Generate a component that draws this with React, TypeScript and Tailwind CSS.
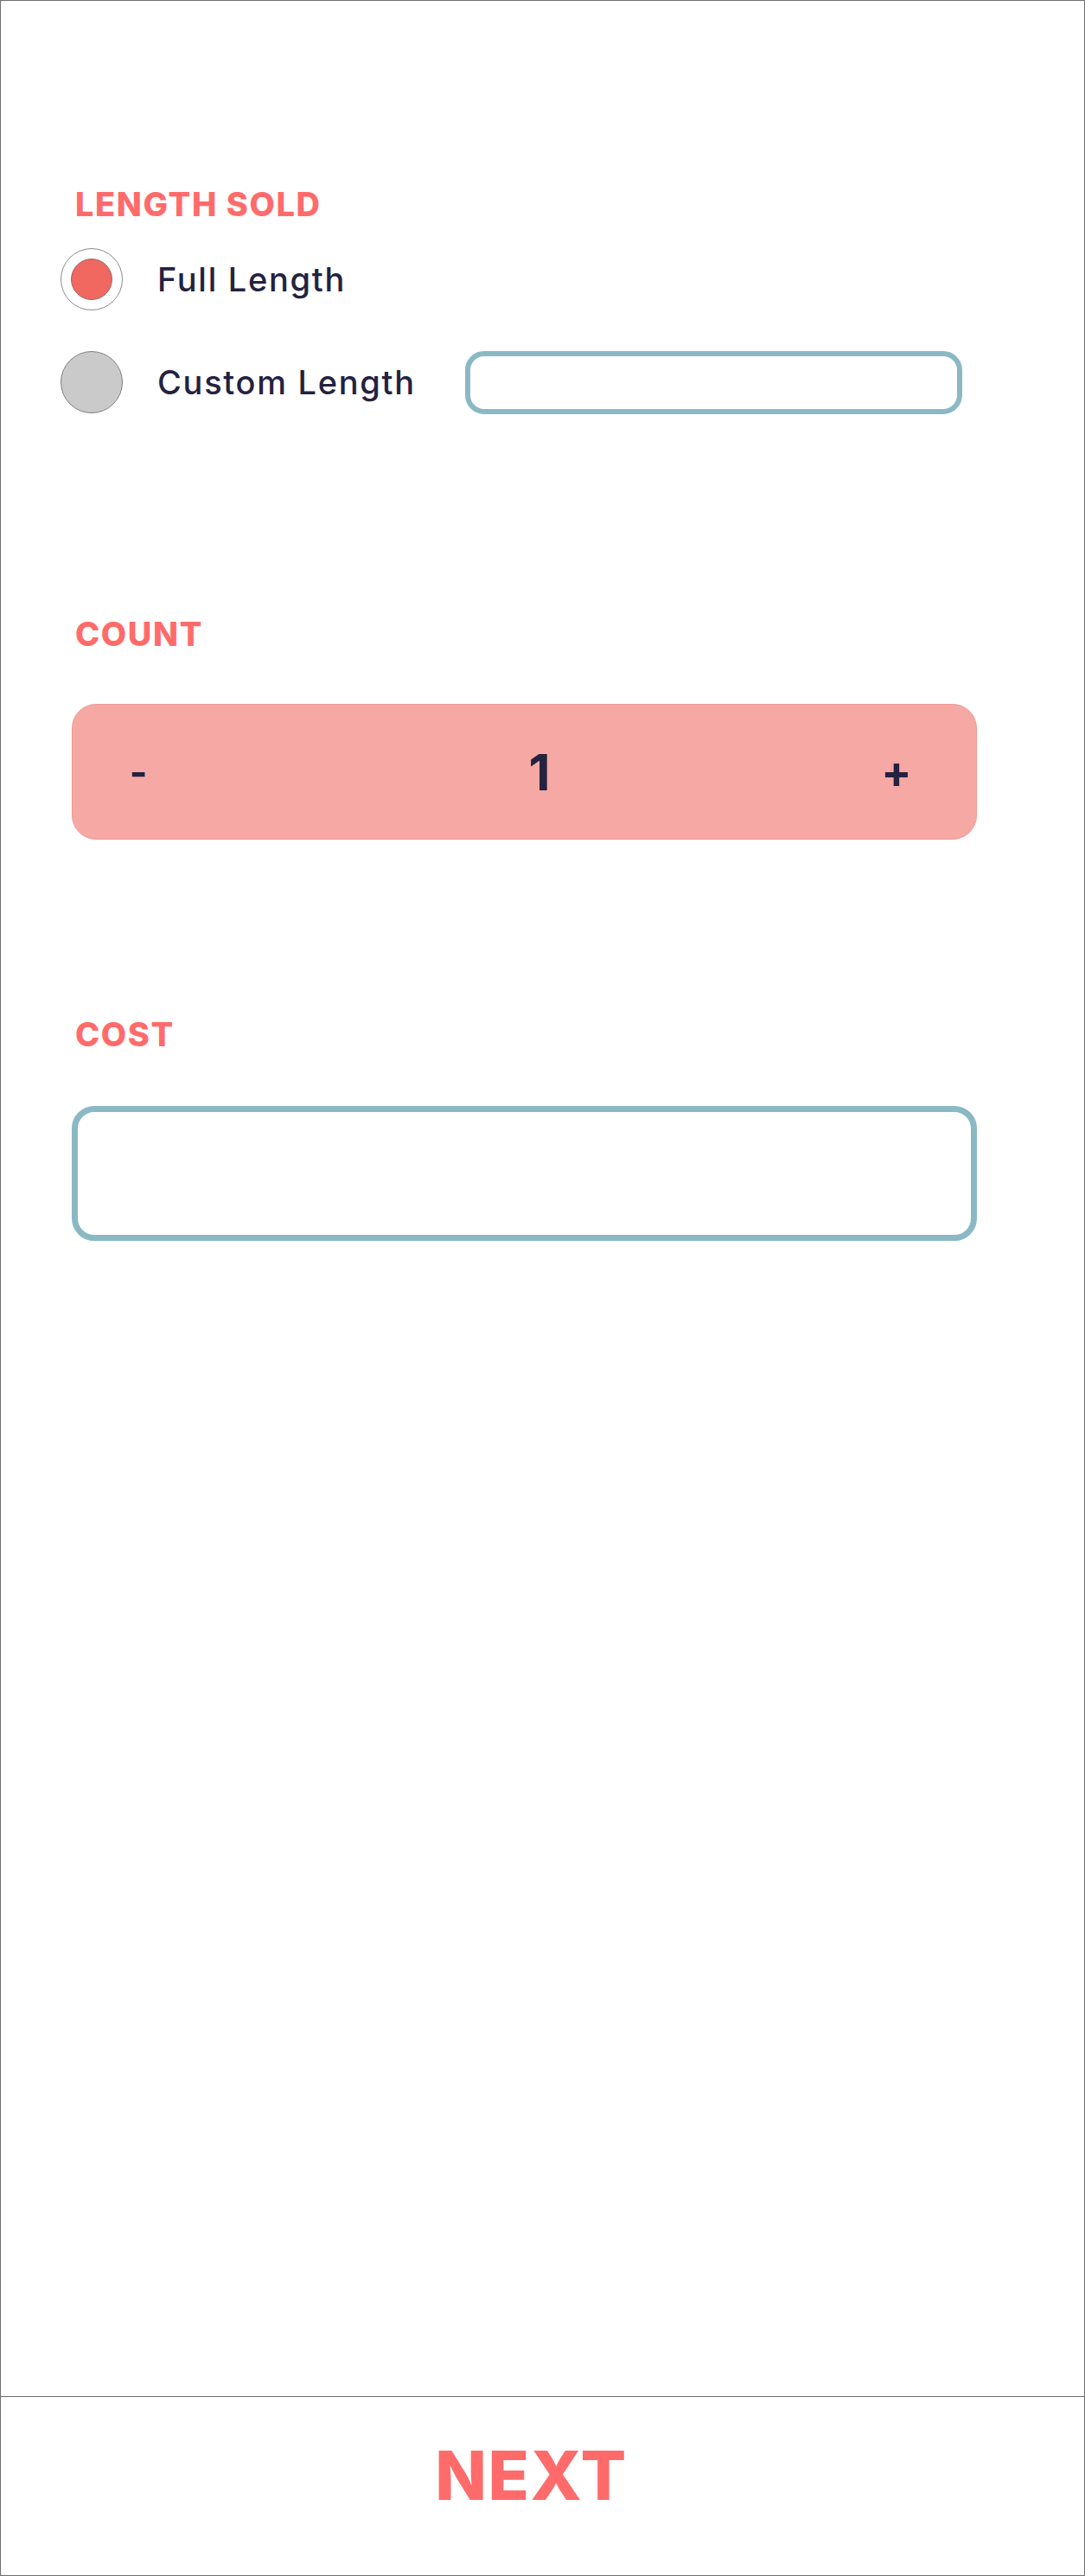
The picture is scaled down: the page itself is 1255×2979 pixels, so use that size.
import React from "react";

const font = { fontFamily: "Inter, 'Noto Sans', sans-serif" };

function Label({ children }: { children: React.ReactNode }) {
  return (
    <div className="pl-[86px] text-[38px] leading-[38px] font-extrabold tracking-[1.6px] text-[#ff6b6b]">
      {children}
    </div>
  );
}

export default function App() {
  return (
    <div
      style={font}
      className="w-[1255px] h-[2979px] bg-white border border-[#6e6e6e] flex flex-col box-border"
    >
      <main className="flex-1 flex flex-col">
        <div className="mt-[216px]">
          <Label>LENGTH SOLD</Label>
        </div>

        <div className="mt-[32px] h-[72px] flex items-center pl-[69px]">
          <div className="w-[72px] h-[72px] rounded-full border border-[#8a8a8a] bg-white flex items-center justify-center">
            <div className="w-[48px] h-[48px] rounded-full bg-[#f0685f] border border-[#9a6a66]" />
          </div>
          <span className="ml-[40px] text-[38px] leading-[38px] font-medium tracking-[1.7px] text-[#24223f]">
            Full Length
          </span>
        </div>

        <div className="mt-[46px] h-[74px] flex items-center pl-[69px]">
          <div className="w-[72px] h-[72px] rounded-full border border-[#7f7f7f] bg-[#cacaca]" />
          <span className="ml-[40px] w-[356px] text-[38px] leading-[38px] font-medium tracking-[1.7px] text-[#24223f]">
            Custom Length
          </span>
          <div className="w-[575px] h-[73px] rounded-[22px] border-[6px] border-[#8ab9c4] bg-white" />
        </div>

        <div className="mt-[235px]">
          <Label>COUNT</Label>
        </div>

        <div className="mt-[62px] ml-[82px] w-[1047px] h-[157px] rounded-[28px] bg-[#f6a8a4] border border-[#f29a95] flex items-center text-[#24223f]">
          <span className="ml-[56px] w-[40px] text-center text-[44px] leading-[44px] font-bold">-</span>
          <span className="ml-[424px] w-[40px] text-center text-[58px] leading-[58px] font-bold">1</span>
          <span className="ml-[373px] w-[40px] text-center text-[52px] leading-[52px] font-bold">+</span>
        </div>

        <div className="mt-[206px]">
          <Label>COST</Label>
        </div>

        <div className="mt-[64px] ml-[82px] w-[1047px] h-[156px] rounded-[26px] border-[7px] border-[#8ab9c4] bg-white" />
      </main>

      <footer className="h-[207px] border-t border-[#6e6e6e] flex items-center justify-center pb-[24px] pr-[26px]">
        <span className="text-[78px] leading-[78px] font-extrabold tracking-[1.5px] text-[#ff6b6b]">NEXT</span>
      </footer>
    </div>
  );
}
